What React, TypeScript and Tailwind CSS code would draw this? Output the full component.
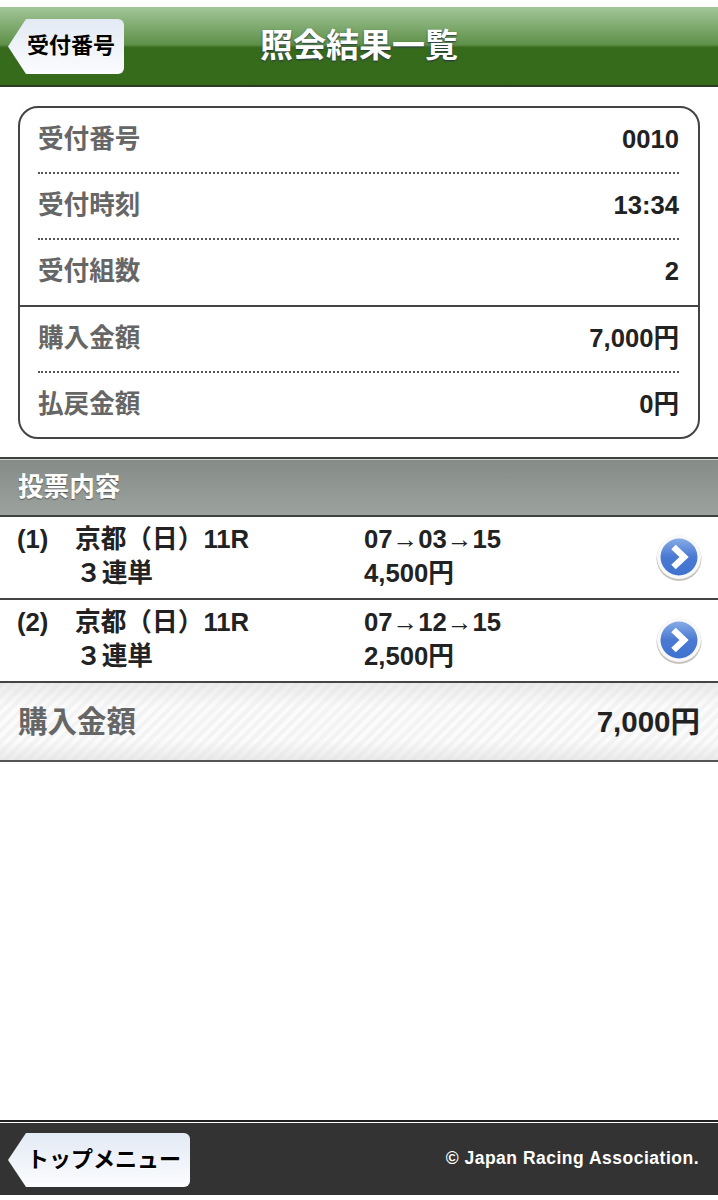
import React from 'react';

interface BackButtonProps {
  label: string;
  className: string;
}

// pointed "back" button used in the title bar and the footer
const BackButton: React.FC<BackButtonProps> = ({ label, className }) => (
  <div className={`flex items-center justify-end rounded-r-[6px] [clip-path:polygon(0_50%,18px_0,100%_0,100%_100%,18px_100%)] bg-linear-to-b from-[#e3eaf4] to-[#fbfcfe] text-black font-bold [text-shadow:0_1px_1px_#fff] ${className}`}>
    {label}
  </div>
);

const ArrowBadge: React.FC = () => (
  <svg width="48" height="48" viewBox="0 0 48 48">
    <defs>
      <linearGradient id="badgeFill" x1="0" y1="0" x2="0" y2="1">
        <stop offset="0" stopColor="#86abe6" />
        <stop offset="0.5" stopColor="#4a79d2" />
        <stop offset="1" stopColor="#3f72d0" />
      </linearGradient>
    </defs>
    <circle cx="24" cy="24.5" r="22.5" fill="#8f8880" opacity="0.5" />
    <circle cx="24" cy="23" r="22" fill="#f8f8f8" />
    <circle cx="24" cy="23" r="18.5" fill="url(#badgeFill)" />
    <path d="M18.5 13 L29 23 L18.5 33" fill="none" stroke="#fff" strokeWidth="6.5" strokeLinejoin="miter" />
  </svg>
);

const infoGroups = [
  [
    { label: '受付番号', value: '0010' },
    { label: '受付時刻', value: '13:34' },
    { label: '受付組数', value: '2' },
  ],
  [
    { label: '購入金額', value: '7,000円' },
    { label: '払戻金額', value: '0円' },
  ],
];

const bets = [
  { no: '(1)', race: '京都（日）11R', type: '３連単', numbers: '07→03→15', amount: '4,500円' },
  { no: '(2)', race: '京都（日）11R', type: '３連単', numbers: '07→12→15', amount: '2,500円' },
];

export default function App() {
  return (
    <div className="min-h-[1200px] flex flex-col bg-white font-['Liberation_Sans','Noto_Sans_CJK_JP',sans-serif] font-bold text-[25.6px] text-[#222]">
      <div className="h-[7px] bg-white" />

      {/* title bar */}
      <header className="h-[80px] grid grid-cols-[1fr_auto_1fr] items-start border-b-2 border-[#2c3a26] bg-linear-to-b from-[#a3c699] via-[#5f9149] via-48% to-[#376b1c] to-52%">
        <BackButton label="受付番号" className="mt-[12px] ml-[8px] w-[116px] h-[55px] pr-[9px] pb-[2px] text-[22px]" />
        <h1 className="mt-[17px] text-[33px] leading-[44px] text-white [text-shadow:0_1px_2px_#234]">照会結果一覧</h1>
      </header>

      {/* receipt summary */}
      <section className="mt-[19px] mx-[18px] h-[333px] rounded-[20px] border-2 border-[#444] pl-[18px] pr-[19px]">
        {infoGroups.map((group, groupIndex) => (
          <div key={groupIndex} className={groupIndex > 0 ? 'border-t-2 border-[#444] -ml-[18px] -mr-[19px] pl-[18px] pr-[19px]' : ''}>
            {group.map((row, rowIndex) => (
              <div
                key={row.label}
                className={`flex items-center justify-between ${
                  rowIndex < group.length - 1 ? 'pb-[2px] border-b-2 border-dotted border-[#555]' : 'pb-[3px]'
                } ${groupIndex === 0 && rowIndex === 2 ? 'h-[65px]' : 'h-[66px]'}`}
              >
                <span className="text-[#666]">{row.label}</span>
                <span>{row.value}</span>
              </div>
            ))}
          </div>
        ))}
      </section>

      {/* bet list */}
      <div className="mt-[18px] h-[60px] pl-[18px] flex items-center border-y-2 border-[#3e423f] shadow-[inset_0_1px_0_#c9cfcb] bg-linear-to-b from-[#858c88] to-[#9ca39e] text-white [text-shadow:0_1px_1px_#555]">
        投票内容
      </div>
      {bets.map(bet => (
        <div key={bet.no} className="h-[83px] flex items-start border-b-2 border-[#444] leading-[34px] pt-[5px] text-[25.7px]">
          <span className="w-[75px] pl-[17px] shrink-0">{bet.no}</span>
          <div className="w-[289px] shrink-0">
            <div>{bet.race}</div>
            <div className="pl-[1px]">{bet.type}</div>
          </div>
          <div className="flex-1">
            <div>{bet.numbers}</div>
            <div>{bet.amount}</div>
          </div>
          <div className="mr-[15px] mt-[12px]">
            <ArrowBadge />
          </div>
        </div>
      ))}

      {/* total */}
      <div className="h-[79px] px-[18px] pt-[2px] flex items-center justify-between text-[29.5px] border-b-2 border-[#555] bg-[linear-gradient(to_bottom,#dcdcdc88,#ffffff00_30%,#ffffff00_75%,#dcdcdc88),repeating-linear-gradient(135deg,#f3f3f3_0,#f3f3f3_4px,#fbfbfb_4px,#fbfbfb_8px)]">
        <span className="text-[#666]">購入金額</span>
        <span>7,000円</span>
      </div>

      <div className="flex-1" />

      <footer className="h-[75px] mb-[5px] flex items-center justify-between border-t-2 border-[#222] shadow-[inset_0_1px_0_#fff] bg-[#333] pr-[19px]">
        <BackButton label="トップメニュー" className="ml-[8px] mt-[3px] w-[182px] h-[54px] pr-[9px] pb-[2px] text-[22px]" />
        <span className="text-[17.5px] tracking-[0.5px] text-white mt-[-1px]">© Japan Racing Association.</span>
      </footer>
    </div>
  );
}
